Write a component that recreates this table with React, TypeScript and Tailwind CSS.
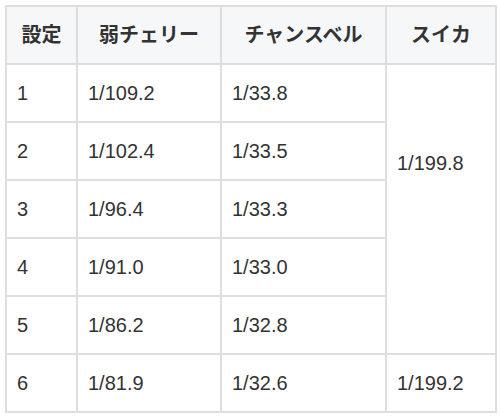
import React from "react";

const rows = [
  { level: "1", cherry: "1/109.2", bell: "1/33.8" },
  { level: "2", cherry: "1/102.4", bell: "1/33.5" },
  { level: "3", cherry: "1/96.4", bell: "1/33.3" },
  { level: "4", cherry: "1/91.0", bell: "1/33.0" },
  { level: "5", cherry: "1/86.2", bell: "1/32.8" },
];

const cell = "border-2 border-[#dedede] px-[10px] text-left align-middle";
const head = "border-2 border-[#dedede] bg-[#f6f7f9] font-bold text-center align-middle";

const App: React.FC = () => {
  return (
    <div
      className="bg-white w-[500px] h-[417px] pl-[5px] pt-[5px] text-[#333] text-[20px]"
      style={{ fontFamily: '"Liberation Sans", "Noto Sans CJK JP", sans-serif' }}
    >
      <table className="w-[490px] table-fixed border-collapse">
        <colgroup>
          <col className="w-[71px]" />
          <col className="w-[144px]" />
          <col className="w-[165px]" />
          <col className="w-[110px]" />
        </colgroup>
        <thead>
          <tr className="h-[58px]">
            <th className={head}>設定</th>
            <th className={head}>弱チェリー</th>
            <th className={head}>チャンスベル</th>
            <th className={head}>スイカ</th>
          </tr>
        </thead>
        <tbody>
          {rows.map((r, i) => (
            <tr key={r.level} className="h-[58px]">
              <td className={cell}>{r.level}</td>
              <td className={cell}>{r.cherry}</td>
              <td className={cell}>{r.bell}</td>
              {i === 0 && (
                <td
                  className="border-2 border-[#dedede] px-[10px] pt-[83px] text-left align-top"
                  rowSpan={5}
                >
                  1/199.8
                </td>
              )}
            </tr>
          ))}
          <tr className="h-[58px]">
            <td className={cell}>6</td>
            <td className={cell}>1/81.9</td>
            <td className={cell}>1/32.6</td>
            <td className={cell}>1/199.2</td>
          </tr>
        </tbody>
      </table>
    </div>
  );
};

export default App;
